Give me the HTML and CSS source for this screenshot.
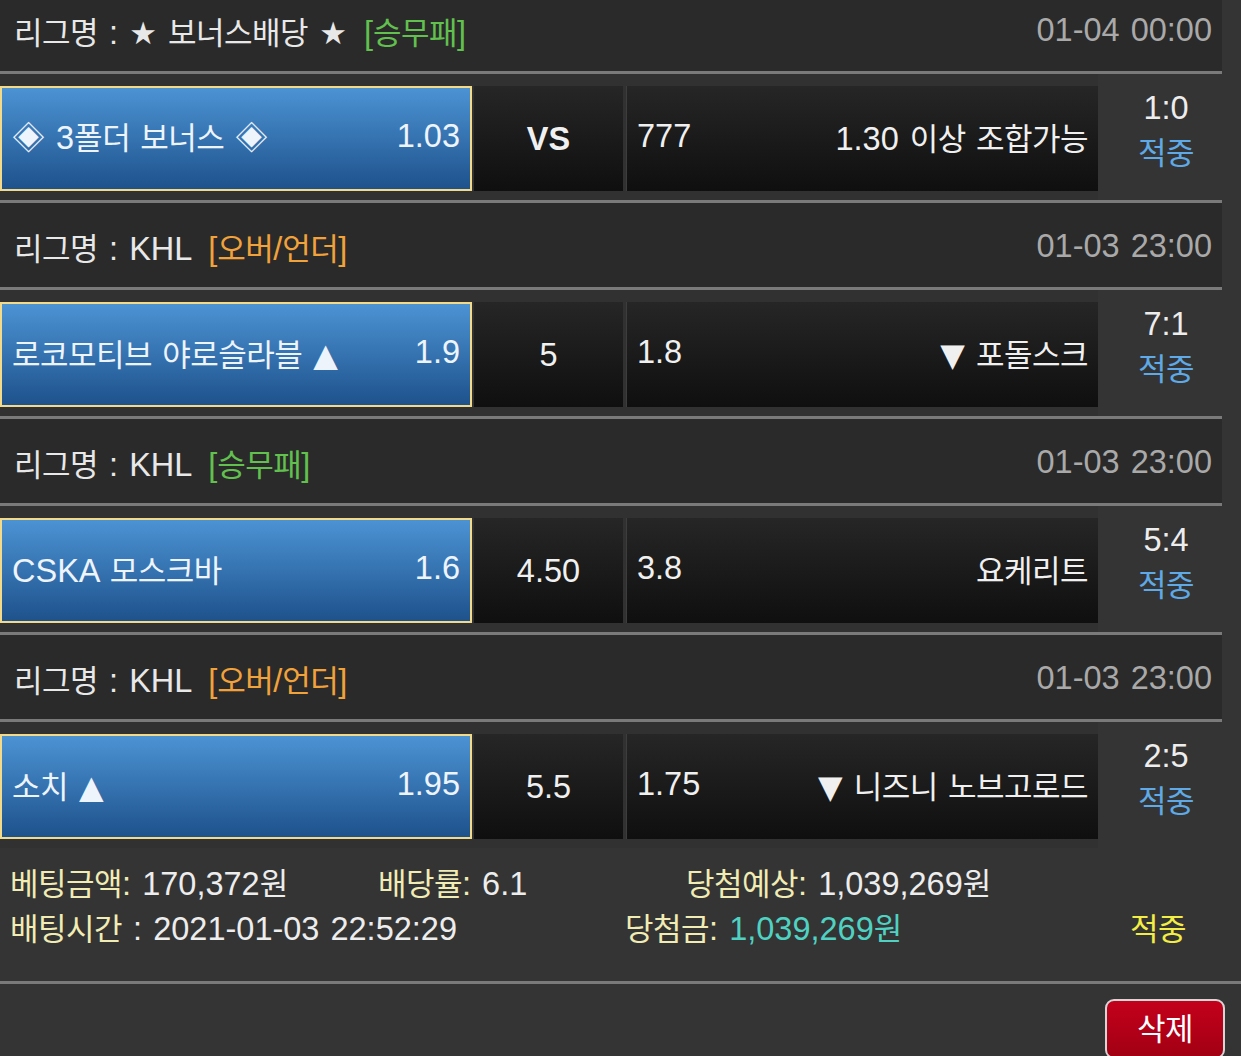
FILE: index.html
```html
<!DOCTYPE html>
<html lang="ko">
<head>
    <meta charset="UTF-8">
    <meta name="viewport" content="width=device-width, initial-scale=1.0">
    <title>배팅내역</title>
    <link rel="stylesheet" href="styles.css">
</head>
<body>
    <div class="slip">
        <div class="league">
            <div class="league-name"><span class="ko">리그명</span> : <span class="star">★</span> <span class="ko">보너스배당</span> <span class="star">★</span> <span class="tag tag-win">[<span class="ko">승무패</span>]</span></div>
            <div class="league-time">01-04 00:00</div>
        </div>
        <div class="match">
            <div class="pick home"><span>◈ 3<span class="ko">폴더 보너스</span> ◈</span><span>1.03</span></div>
            <div class="pick mid"><b>VS</b></div>
            <div class="pick away"><span>777</span><span>1.30 <span class="ko">이상 조합가능</span></span></div>
            <div class="result"><div>1:0</div><div class="hit ko">적중</div></div>
        </div>

        <div class="league">
            <div class="league-name"><span class="ko">리그명</span> : KHL <span class="tag tag-ou">[<span class="ko">오버</span>/<span class="ko">언더</span>]</span></div>
            <div class="league-time">01-03 23:00</div>
        </div>
        <div class="match">
            <div class="pick home"><span><span class="ko">로코모티브 야로슬라블</span> <span class="arrow">▲</span></span><span>1.9</span></div>
            <div class="pick mid">5</div>
            <div class="pick away"><span>1.8</span><span><span class="arrow">▼</span> <span class="ko">포돌스크</span></span></div>
            <div class="result"><div>7:1</div><div class="hit ko">적중</div></div>
        </div>

        <div class="league">
            <div class="league-name"><span class="ko">리그명</span> : KHL <span class="tag tag-win">[<span class="ko">승무패</span>]</span></div>
            <div class="league-time">01-03 23:00</div>
        </div>
        <div class="match">
            <div class="pick home"><span>CSKA <span class="ko">모스크바</span></span><span>1.6</span></div>
            <div class="pick mid">4.50</div>
            <div class="pick away"><span>3.8</span><span class="ko">요케리트</span></div>
            <div class="result"><div>5:4</div><div class="hit ko">적중</div></div>
        </div>

        <div class="league">
            <div class="league-name"><span class="ko">리그명</span> : KHL <span class="tag tag-ou">[<span class="ko">오버</span>/<span class="ko">언더</span>]</span></div>
            <div class="league-time">01-03 23:00</div>
        </div>
        <div class="match">
            <div class="pick home"><span><span class="ko">소치</span> <span class="arrow">▲</span></span><span>1.95</span></div>
            <div class="pick mid">5.5</div>
            <div class="pick away"><span>1.75</span><span><span class="arrow">▼</span> <span class="ko">니즈니 노브고로드</span></span></div>
            <div class="result"><div>2:5</div><div class="hit ko">적중</div></div>
        </div>
    </div>

    <div class="summary">
        <div class="sum-row">
            <div><span class="label"><span class="ko">베팅금액</span>:</span> 170,372<span class="ko">원</span></div>
            <div><span class="label"><span class="ko">배당률</span>:</span> 6.1</div>
            <div><span class="label"><span class="ko">당첨예상</span>:</span> 1,039,269<span class="ko">원</span></div>
        </div>
        <div class="sum-row second">
            <div><span class="label ko">배팅시간</span> : 2021-01-03 22:52:29</div>
            <div><span class="label"><span class="ko">당첨금</span>:</span> <span class="won">1,039,269<span class="ko">원</span></span></div>
            <div class="status ko">적중</div>
        </div>
    </div>

    <div class="actions">
        <button class="btn-delete ko">삭제</button>
    </div>
</body>
</html>
```

FILE: styles.css
```css
body { margin: 0; background-color: #343434; color: #ededed; font-family: "Liberation Sans", "Noto Sans CJK KR", sans-serif; font-size: 32.5px; word-spacing: 2px; overflow: hidden; }
.ko { font-size: 31px; letter-spacing: -0.5px; }

/* league header + match rows */
.slip { width: 1222px; margin-top: -16px; }
.league { display: flex; justify-content: space-between; align-items: center; height: 90px; box-sizing: border-box; padding: 3px 10px 0 14px; background-color: #2a2a2a; border-top: 3px solid #7a7a7a; border-bottom: 3px solid #7a7a7a; }
.league-name { color: #e8e8e8; }
.league-time { color: #a9a9a9; }
.star { font-family: "DejaVu Sans", sans-serif; font-size: 31px; }
.tag { margin-left: 6px; }
.tag-win { color: #62c04e; }
.tag-ou { color: #f2a23a; }

.match { display: flex; align-items: flex-start; height: 126px; box-sizing: border-box; padding: 12px 0 9px; background-color: #313131; }
.pick { display: flex; align-items: center; justify-content: space-between; height: 105px; box-sizing: border-box; padding: 0 10px 4px; color: #f0f0f0; }
.pick.home { width: 472px; border: 2px solid #f3d98a; background: linear-gradient(#4c93d4, #1e528c); color: #eef4fb; }
.pick.mid { width: 149px; margin-left: 2px; justify-content: center; padding: 2px 0 0; background: linear-gradient(#262626, #0f0f0f); }
.pick.away { width: 472px; margin-left: 3px; border-left: 1px solid #3d3d3d; background: linear-gradient(#262626, #0f0f0f); }
.arrow { font-family: "DejaVu Sans", sans-serif; font-size: 32px; }
.result { width: 124px; height: 126px; box-sizing: border-box; margin-top: -12px; padding: 12px 0 0 12px; text-align: center; line-height: 45px; background-color: #343434; }
.result .hit { color: #5ea9e6; }

/* totals */
.summary { padding: 14px 0 29px 10px; line-height: 45px; border-bottom: 3px solid #7a7a7a; }
.sum-row { display: grid; grid-template-columns: 368px 308px 1fr; white-space: nowrap; }
.sum-row.second { grid-template-columns: 615px 505px 1fr; }
.label { color: #f1ecb4; }
.won { color: #4fd2c2; }
.status { color: #f3ee45; }

.actions { display: flex; justify-content: flex-end; padding: 15px 16px 0 0; }
.btn-delete { width: 120px; height: 60px; padding: 0 0 6px; border: 2px solid #d6d6d6; border-radius: 9px; background: linear-gradient(#c4001c, #a10013); color: #fff; font-family: inherit; font-size: 31px; cursor: pointer; }
```
